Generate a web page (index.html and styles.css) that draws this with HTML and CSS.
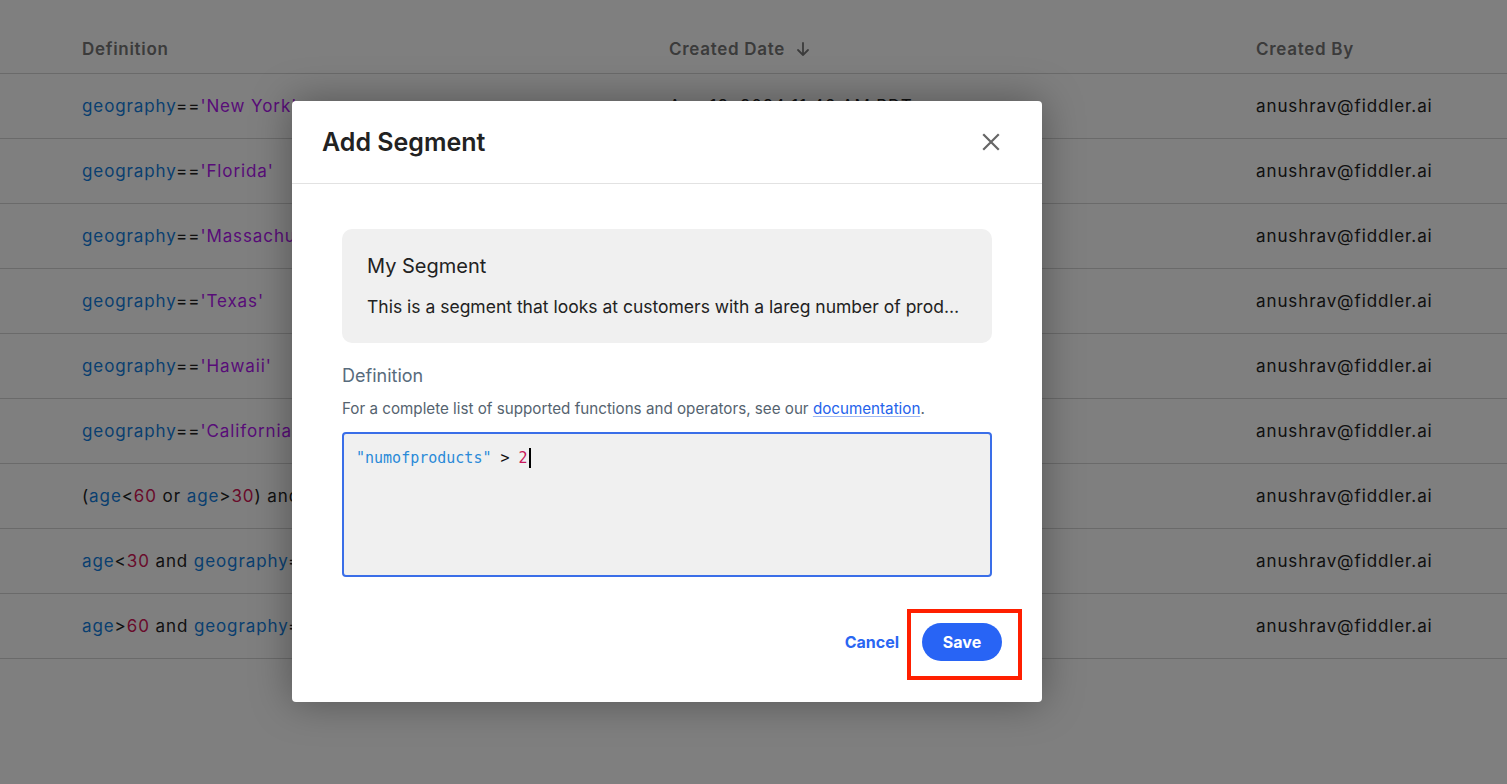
FILE: index.html
```html
<!DOCTYPE html>
<html lang="en">
<head>
<meta charset="utf-8">
<title>Segments</title>
<link rel="stylesheet" href="styles.css">
</head>
<body>
<div class="page">
  <div class="table">
    <div class="row head">
      <div class="cell">Definition</div>
      <div class="cell">Created Date<svg class="sort" width="16" height="16" viewBox="0 0 16 16" fill="none" stroke="currentColor" stroke-width="1.8" stroke-linecap="round" stroke-linejoin="round"><path d="M8 2v12M3 9l5 5 5-5"/></svg></div>
      <div class="cell">Created By</div>
    </div>
    <div class="row">
      <div class="cell"><span class="k">geography</span>==<span class="s">'New York'</span></div>
      <div class="cell">Aug 13, 2024 11:46 AM PDT</div>
      <div class="cell">anushrav@fiddler.ai</div>
    </div>
    <div class="row">
      <div class="cell"><span class="k">geography</span>==<span class="s">'Florida'</span></div>
      <div class="cell">Aug 13, 2024 11:46 AM PDT</div>
      <div class="cell">anushrav@fiddler.ai</div>
    </div>
    <div class="row">
      <div class="cell"><span class="k">geography</span>==<span class="s">'Massachusetts'</span></div>
      <div class="cell">Aug 13, 2024 11:46 AM PDT</div>
      <div class="cell">anushrav@fiddler.ai</div>
    </div>
    <div class="row">
      <div class="cell"><span class="k">geography</span>==<span class="s">'Texas'</span></div>
      <div class="cell">Aug 13, 2024 11:46 AM PDT</div>
      <div class="cell">anushrav@fiddler.ai</div>
    </div>
    <div class="row">
      <div class="cell"><span class="k">geography</span>==<span class="s">'Hawaii'</span></div>
      <div class="cell">Aug 13, 2024 11:46 AM PDT</div>
      <div class="cell">anushrav@fiddler.ai</div>
    </div>
    <div class="row">
      <div class="cell"><span class="k">geography</span>==<span class="s">'California'</span></div>
      <div class="cell">Aug 13, 2024 11:46 AM PDT</div>
      <div class="cell">anushrav@fiddler.ai</div>
    </div>
    <div class="row">
      <div class="cell">(<span class="k">age</span>&lt;<span class="n">60</span> or <span class="k">age</span>&gt;<span class="n">30</span>) and <span class="k">geography</span>==<span class="s">'Texas'</span></div>
      <div class="cell">Aug 13, 2024 11:46 AM PDT</div>
      <div class="cell">anushrav@fiddler.ai</div>
    </div>
    <div class="row">
      <div class="cell"><span class="k">age</span>&lt;<span class="n">30</span> and <span class="k">geography</span>==<span class="s">'Texas'</span></div>
      <div class="cell">Aug 13, 2024 11:46 AM PDT</div>
      <div class="cell">anushrav@fiddler.ai</div>
    </div>
    <div class="row">
      <div class="cell"><span class="k">age</span>&gt;<span class="n">60</span> and <span class="k">geography</span>==<span class="s">'Texas'</span></div>
      <div class="cell">Aug 13, 2024 11:46 AM PDT</div>
      <div class="cell">anushrav@fiddler.ai</div>
    </div>
  </div>
</div>

<div class="overlay">
  <div class="modal">
    <div class="modal-head">
      <h2 class="modal-title">Add Segment</h2>
      <svg class="close" width="18" height="18" viewBox="0 0 18 18" fill="none" stroke="currentColor" stroke-width="2.2" stroke-linecap="square"><path d="M2 2l14 14M16 2L2 16"/></svg>
    </div>
    <div class="modal-body">
      <div class="summary">
        <div class="summary-title">My Segment</div>
        <div class="summary-desc">This is a segment that looks at customers with a lareg number of products and more things to describe here</div>
      </div>
      <div class="label">Definition</div>
      <div class="help">For a complete list of supported functions and operators, see our <a class="link" href="#">documentation</a>.</div>
      <div class="editor"><span class="c-str">"numofproducts"</span> &gt; <span class="c-num">2</span><span class="caret"></span></div>
    </div>
    <div class="modal-foot">
      <span class="cancel">Cancel</span>
      <span class="save-wrap"><button class="save">Save</button></span>
    </div>
  </div>
</div>
</body>
</html>
```

FILE: styles.css
```css
* { box-sizing: border-box; }
html, body { margin: 0; padding: 0; }
body {
  width: 1507px;
  height: 784px;
  overflow: hidden;
  background: #ffffff;
  font-family: Inter, "Noto Sans", sans-serif;
  color: #222;
  position: relative;
}
.table { width: 100%; }
.row {
  display: grid;
  grid-template-columns: 587px 587px 1fr;
  padding-left: 82px;
  height: 65px;
  align-items: center;
  border-bottom: 1px solid #d4d4d4;
  font-size: 17px;
  letter-spacing: 0.9px;
  color: #222;
}
.row.head {
  height: 74px;
  padding-top: 24px;
  font-weight: 600;
  color: #777;
  letter-spacing: 0.7px;
}
.cell { white-space: nowrap; }
.sort { margin-left: 10px; vertical-align: -2px; }
.k { color: #137ee0; }
.s { color: #b018f0; }
.n { color: #d21656; }

.overlay {
  position: absolute;
  inset: 0;
  background: rgba(0, 0, 0, 0.5);
  display: flex;
  justify-content: flex-start;
  align-items: flex-start;
  padding: 101px 0 0 292px;
}
.modal {
  width: 750px;
  height: 601px;
  background: #fff;
  border-radius: 4px;
  box-shadow: 0 0 40px rgba(0, 0, 0, 0.35);
  display: flex;
  flex-direction: column;
}
.modal-head {
  height: 83px;
  border-bottom: 1px solid #e2e2e2;
  display: flex;
  align-items: center;
  justify-content: space-between;
  padding: 0 42px 0 30px;
}
.modal-title {
  margin: 0;
  font-size: 25px;
  font-weight: 600;
  color: #222;
}
.close { color: #666; }
.modal-body { padding: 45px 50px 0; }
.summary {
  background: #f0f0f0;
  border-radius: 10px;
  padding: 24px 25px 24px 25px;
  height: 114px;
}
.summary-title {
  font-size: 20px;
  line-height: 26px;
  color: #222;
  margin-bottom: 16px;
}
.summary-desc {
  font-size: 17.5px;
  line-height: 24px;
  color: #222;
  white-space: nowrap;
  overflow: hidden;
  text-overflow: ellipsis;
}
.label {
  margin-top: 21px;
  font-size: 18px;
  line-height: 24px;
  color: #586b7c;
}
.help {
  margin-top: 11px;
  font-size: 15.2px;
  line-height: 20px;
  color: #55636f;
}
.link { color: #2563eb; text-decoration: underline; text-decoration-color: #9db8f5; text-underline-offset: 2px; }
.editor {
  margin-top: 13px;
  height: 145px;
  background: #f0f0f0;
  border: 2px solid #3a6ee8;
  border-radius: 4px;
  padding: 14px 12px 12px;
  font-family: "DejaVu Sans Mono", monospace;
  font-size: 15px;
  line-height: 20px;
  color: #111;
  display: flex;
  align-items: flex-start;
  white-space: pre;
}
.c-str { color: #2a8ad8; }
.c-num { color: #c8185a; }
.caret {
  display: inline-block;
  width: 2px;
  height: 20px;
  background: #000;
  margin-left: 1px;
}
.modal-foot {
  margin-top: auto;
  padding: 0 40px 41px 0;
  display: flex;
  justify-content: flex-end;
  align-items: center;
  gap: 23px;
}
.cancel {
  font-size: 16px;
  font-weight: 700;
  color: #2a66f2;
}
.save-wrap { position: relative; display: inline-flex; }
.save-wrap::after {
  content: "";
  position: absolute;
  left: -15px;
  top: -14px;
  right: -20px;
  bottom: -19px;
  border: 4px solid #ff1f00;
}
.save {
  width: 80px;
  height: 38px;
  border: none;
  border-radius: 19px;
  background: #2864f5;
  color: #fff;
  font-family: Inter, sans-serif;
  font-size: 16px;
  font-weight: 700;
  padding: 0;
}
```
